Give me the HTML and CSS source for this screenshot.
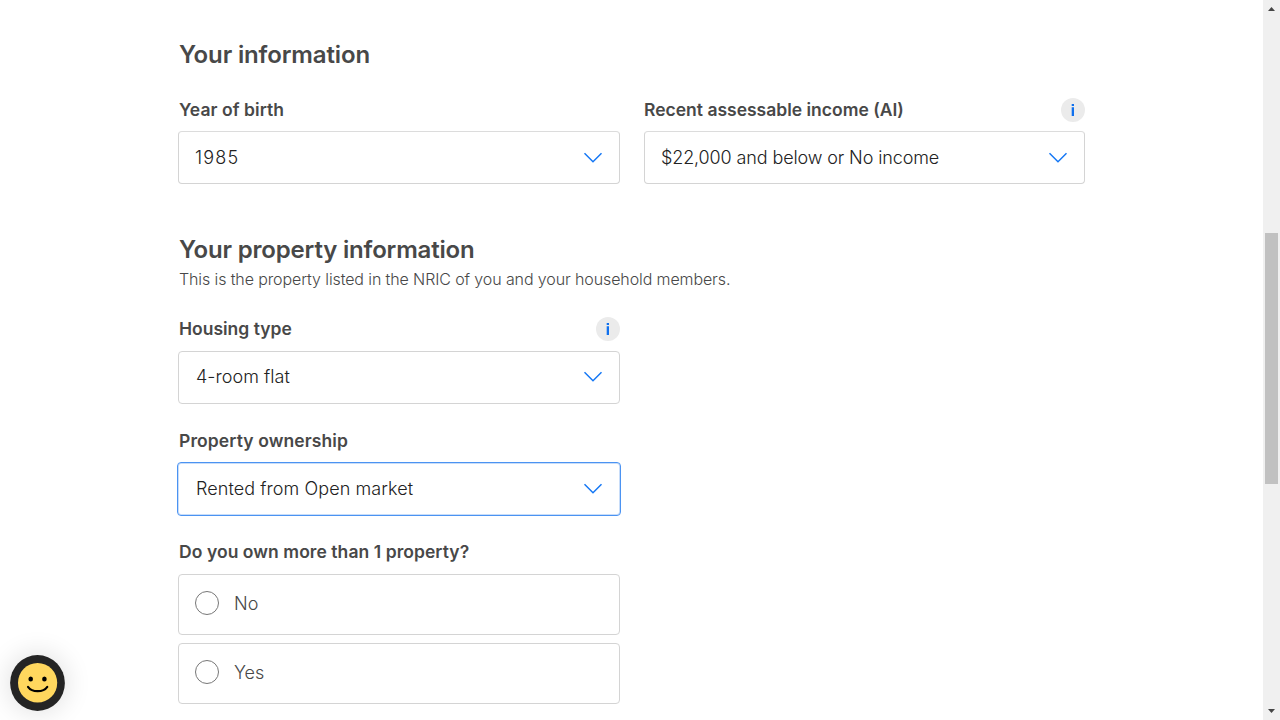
FILE: index.html
```html
<!DOCTYPE html>
<html lang="en">
<head>
<meta charset="utf-8">
<title>Your information</title>
<link rel="stylesheet" href="styles.css">
</head>
<body>
<div class="page">
<main class="form">
  <section>
    <h2 class="heading"><span class="h-info">Your information</span></h2>
    <div class="columns">
      <div class="field">
        <div class="label-row"><span class="label l-year">Year of birth</span></div>
        <div class="select soft"><span class="value v-year">1985</span><svg class="chevron" width="20" height="12" viewBox="0 0 20 12"><path d="M1.5 1.3 10 9.7 18.5 1.3"/></svg></div>
      </div>
      <div class="field">
        <div class="label-row income-row"><span class="label">Recent assessable income (AI)</span><span class="info"><svg width="24" height="24" viewBox="0 0 24 24"><path d="M10.7 6h2.3v2h-2.3zM10.7 9.3h2.3V18h-2.3z"/></svg></span></div>
        <div class="select soft"><span class="value v-income">$22,000 and below or No income</span><svg class="chevron" width="20" height="12" viewBox="0 0 20 12"><path d="M1.5 1.3 10 9.7 18.5 1.3"/></svg></div>
      </div>
    </div>
  </section>
  <section class="property">
    <h2 class="heading"><span class="h-property">Your property information</span></h2>
    <p class="note">This is the property listed in the NRIC of you and your household members.</p>
    <div class="field housing">
      <div class="label-row"><span class="label">Housing type</span><span class="info"><svg width="24" height="24" viewBox="0 0 24 24"><path d="M10.7 6h2.3v2h-2.3zM10.7 9.3h2.3V18h-2.3z"/></svg></span></div>
      <div class="select"><span class="value v-housing">4-room flat</span><svg class="chevron" width="20" height="12" viewBox="0 0 20 12"><path d="M1.5 1.3 10 9.7 18.5 1.3"/></svg></div>
    </div>
    <div class="field ownership">
      <div class="label-row"><span class="label l-owner">Property ownership</span></div>
      <div class="select focused"><span class="value v-owner">Rented from Open market</span><svg class="chevron" width="20" height="12" viewBox="0 0 20 12"><path d="M1.5 1.3 10 9.7 18.5 1.3"/></svg></div>
    </div>
    <div class="field multiple">
      <div class="label-row"><span class="label l-more">Do you own more than 1 property?</span></div>
      <div class="options">
        <div class="option"><span class="radio"></span><span>No</span></div>
        <div class="option"><span class="radio"></span><span>Yes</span></div>
      </div>
    </div>
  </section>
</main>
<div class="scrollbar">
  <svg width="17" height="17" viewBox="0 0 17 17"><path d="M5 11h7L8.5 7z"/></svg>
  <div class="thumb"></div>
  <svg width="17" height="17" viewBox="0 0 17 17"><path d="M5 6h7L8.5 10z"/></svg>
</div>
</div>
<div class="feedback">
  <svg width="55" height="56" viewBox="0 0 55 56"><ellipse cx="27.5" cy="28" rx="27.4" ry="27.9" fill="#242424"/><ellipse cx="27.6" cy="27.8" rx="19.6" ry="19.8" fill="#ffd75e"/><ellipse cx="20.7" cy="24" rx="2.3" ry="2.5"/><ellipse cx="34.4" cy="24" rx="2.3" ry="2.5"/><path d="M18 31.8C22 37.6 33.3 37.6 37.3 31.8" fill="none" stroke="#000" stroke-width="2.1" stroke-linecap="round"/></svg>
</div>
</body>
</html>
```
FILE: styles.css
```css
* { box-sizing: border-box; }
body { margin: 0; background: #fff; color: #484848; font-family: Inter, "Liberation Sans", sans-serif; overflow: hidden; }
.page { display: flex; justify-content: space-between; height: 720px; overflow: hidden; }
.form { width: 1085px; padding: 38px 0 0 178px; }
.heading { margin: 0; height: 32px; font-size: 24px; line-height: 34px; font-weight: 600; padding-left: 1px; white-space: nowrap; }
.h-info { letter-spacing: -.14px; }
.h-property { letter-spacing: -.18px; }
.columns { display: grid; grid-template-columns: 442px 441px; column-gap: 24px; margin-top: 28px; }
.label-row { display: flex; align-items: center; justify-content: space-between; height: 24px; padding-left: 1px; }
.income-row { padding-left: 0; }
.label { font-size: 17.5px; line-height: 24px; font-weight: 600; white-space: nowrap; }
.l-year { letter-spacing: .06px; }
.l-owner { letter-spacing: .1px; padding-top: 2px; }
.l-more { letter-spacing: .06px; }
.info { width: 24px; height: 24px; border-radius: 50%; background: #ebebeb; }
.info svg { display: block; fill: #1070ee; }
.select { display: flex; align-items: center; justify-content: space-between; height: 53px; margin-top: 9px; padding: 0 16px; border: 1px solid #d4d4d4; border-radius: 4px; background: #fff; }
.select.soft { border-top-color: #dcdcdc; }
.value { font-size: 18px; line-height: 26px; font-weight: 300; color: #222; white-space: nowrap; }
.v-year { letter-spacing: 1.2px; }
.v-income { letter-spacing: -.12px; }
.v-housing { letter-spacing: .05px; padding-left: 1px; }
.v-owner { letter-spacing: .08px; padding-left: 1px; }
.chevron { fill: none; stroke: #1477f5; stroke-width: 1.5; }
.property { margin-top: 49px; }
.note { margin: 0; height: 28px; padding-left: 1px; font-size: 16px; line-height: 28px; font-weight: 300; letter-spacing: -.11px; white-space: nowrap; }
.property .field { width: 442px; }
.housing { margin-top: 24px; }
.housing .select { margin-top: 10px; padding-bottom: 2px; }
.ownership { margin-top: 24px; }
.focused { height: 54px; width: 444px; margin: 10px -1px 0; border-color: #4b93f2; box-shadow: inset 0 0 0 1px #c8ddf9; padding: 0 17px; }
.multiple { margin-top: 24px; }
.options { display: grid; gap: 8px; margin-top: 10px; }
.option { display: flex; align-items: center; height: 61px; padding: 0 0 2px 16px; gap: 15px; border: 1px solid #d4d4d4; border-radius: 4px; font-size: 18px; font-weight: 300; line-height: 26px; }
.radio { width: 24px; height: 24px; margin-top: -1px; border: 1px solid #777; border-radius: 50%; }
.scrollbar { display: flex; flex-direction: column; justify-content: space-between; align-items: center; width: 17px; height: 720px; background: #f0f0f0; }
.scrollbar svg { fill: #454545; }
.thumb { width: 13px; height: 251px; margin-bottom: 3px; background: #c1c1c1; }
.feedback { position: absolute; left: 10px; top: 655px; width: 55px; height: 56px; border-radius: 50%; box-shadow: 0 0 28px rgba(0,0,0,.14); }
.feedback svg { display: block; }
```
